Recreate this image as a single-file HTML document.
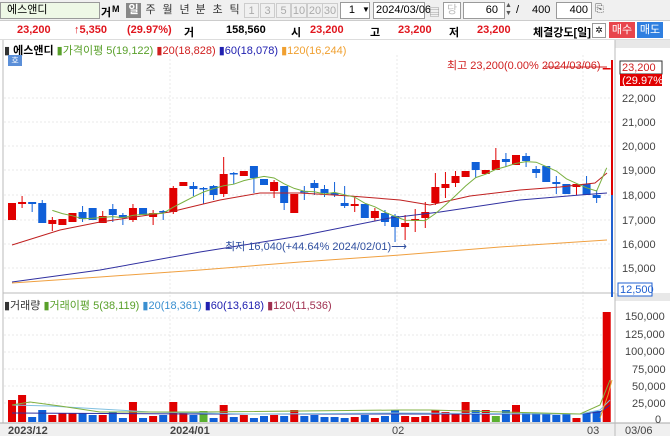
<!DOCTYPE html>
<html><head><meta charset="utf-8"><style>
*{margin:0;padding:0;box-sizing:border-box}
body{width:670px;height:436px;overflow:hidden;background:#fff;font-family:"Liberation Sans","Noto Sans CJK KR",sans-serif;font-size:11px;position:relative}
.abs{position:absolute;white-space:nowrap}
.r1{left:0;top:0;width:670px;height:21px;background:#f0f0f0;border-bottom:1px solid #ccc}
.box{position:absolute;border:1px solid #9a9a9a;background:#fff;height:17px;top:2px;font-size:11px;line-height:15px}
.tab{position:absolute;top:3px;height:15px;width:15px;text-align:center;font-size:11px;line-height:15px;color:#333}
.r2{left:0;top:21px;width:670px;height:19px;background:#fff;border-bottom:1px solid #ddd}
.red{color:#e0161e;font-weight:bold}
.b{font-weight:bold}
</style></head><body>
<div class="abs r1"></div>
<div class="box" style="left:0;width:100px;background:#eef8e6;padding-left:6px">에스앤디</div>
<div class="abs b" style="left:101px;top:4px">거</div>
<div class="abs b" style="left:112px;top:4px;font-size:9px">M</div>
<div class="tab" style="left:126px;background:#888;color:#fff;font-weight:bold">일</div>
<div class="tab" style="left:143px">주</div>
<div class="tab" style="left:160px">월</div>
<div class="tab" style="left:177px">년</div>
<div class="tab" style="left:193px">분</div>
<div class="tab" style="left:210px">초</div>
<div class="tab" style="left:227px">틱</div>
<div class="tab" style="left:244px;color:#aaa;border:1px solid #ccc">1</div>
<div class="tab" style="left:260px;color:#aaa;border:1px solid #ccc">3</div>
<div class="tab" style="left:276px;color:#aaa;border:1px solid #ccc">5</div>
<div class="tab" style="left:291px;color:#aaa;border:1px solid #ccc;width:16px">10</div>
<div class="tab" style="left:307px;color:#aaa;border:1px solid #ccc;width:16px">20</div>
<div class="tab" style="left:322px;color:#aaa;border:1px solid #ccc;width:16px">30</div>
<div class="box" style="left:340px;width:30px;text-align:right;padding-right:14px">1</div>
<div class="abs" style="left:362px;top:5px;font-size:8px">▼</div>
<div class="box" style="left:373px;width:52px;padding-left:2px">2024/03/06</div>
<div class="abs" style="left:429px;top:4px;color:#888">▤</div>
<div class="box" style="left:443px;width:18px;color:#bbb;text-align:center">당</div>
<div class="box" style="left:463px;width:42px;text-align:right;padding-right:6px">60</div>
<div class="abs" style="left:505px;top:2px;font-size:7px;line-height:8px;color:#555">▲<br>▼</div>
<div class="abs" style="left:516px;top:4px">/</div>
<div class="abs" style="left:532px;top:4px">400</div>
<div class="box" style="left:556px;width:36px;text-align:right;padding-right:3px">400</div>
<div class="abs" style="left:595px;top:3px;color:#555">⎘</div>

<div class="abs r2"></div>
<div class="abs red" style="left:17px;top:24px">23,200</div>
<div class="abs red" style="left:74px;top:24px">↑5,350</div>
<div class="abs red" style="left:127px;top:24px">(29.97%)</div>
<div class="abs b" style="left:184px;top:24px">거</div>
<div class="abs b" style="left:226px;top:24px">158,560</div>
<div class="abs b" style="left:291px;top:24px">시</div>
<div class="abs red" style="left:310px;top:24px">23,200</div>
<div class="abs b" style="left:370px;top:24px">고</div>
<div class="abs red" style="left:398px;top:24px">23,200</div>
<div class="abs b" style="left:449px;top:24px">저</div>
<div class="abs red" style="left:477px;top:24px">23,200</div>
<div class="abs b" style="left:533px;top:24px">체결강도[일]</div>
<div class="abs" style="left:592px;top:23px;width:14px;height:15px;border:1px solid #999;text-align:center;font-size:9px;line-height:13px">✲</div>
<div class="abs" style="left:609px;top:22px;width:26px;height:16px;background:#e8454c;color:#fff;text-align:center;line-height:16px">매수</div>
<div class="abs" style="left:637px;top:22px;width:26px;height:16px;background:#2f7fe0;color:#fff;text-align:center;line-height:16px">매도</div>

<div class="abs" style="left:4px;top:42px;font-size:11px"><span style="color:#333">▮ </span><b>에스앤디</b> <span style="color:#59a02a">▮가격이평 5(19,122)</span> <span style="color:#d02020">▮20(18,828)</span> <span style="color:#2020b0">▮60(18,078)</span> <span style="color:#f0a030">▮120(16,244)</span></div>
<div class="abs" style="left:8px;top:55px;width:14px;height:11px;background:#5b8fd8;color:#fff;font-size:8px;text-align:center;line-height:11px">호</div>

<div class="abs" style="left:4px;top:297px;font-size:11px"><span style="color:#333">▮거래량</span> <span style="color:#59a02a">▮거래이평 5(38,119)</span> <span style="color:#3a8fd0">▮20(18,361)</span> <span style="color:#2020b0">▮60(13,618)</span> <span style="color:#a03050">▮120(11,536)</span></div>

<svg class="abs" style="left:0;top:0" width="670" height="436" id="s">
<g stroke="#e8e8e8" stroke-dasharray="2,2" fill="none">
<line x1="4" y1="98" x2="612" y2="98"/><line x1="4" y1="122" x2="612" y2="122"/><line x1="4" y1="146" x2="612" y2="146"/><line x1="4" y1="170" x2="612" y2="170"/><line x1="4" y1="195" x2="612" y2="195"/><line x1="4" y1="220" x2="612" y2="220"/><line x1="4" y1="244" x2="612" y2="244"/><line x1="4" y1="268" x2="612" y2="268"/>
<line x1="4" y1="318" x2="612" y2="318"/><line x1="4" y1="335" x2="612" y2="335"/><line x1="4" y1="352" x2="612" y2="352"/><line x1="4" y1="369" x2="612" y2="369"/><line x1="4" y1="386" x2="612" y2="386"/><line x1="4" y1="403" x2="612" y2="403"/>
<line x1="170" y1="55" x2="170" y2="422"/><line x1="397" y1="55" x2="397" y2="422"/><line x1="583" y1="55" x2="583" y2="422"/>
</g>
<line x1="3" y1="40" x2="3" y2="424" stroke="#bbb"/>
<line x1="3" y1="293" x2="615" y2="293" stroke="#bbb"/>
<rect x="615" y="40" width="55" height="8" fill="#e8e8e8"/>
<rect x="615" y="293" width="55" height="8" fill="#e8e8e8"/>
<rect x="0" y="423" width="670" height="13" fill="#f0f0f0"/>
<line x1="0" y1="423" x2="670" y2="423" stroke="#aaa"/>
<line x1="615" y1="40" x2="615" y2="436" stroke="#bbb"/>
<line x1="612" y1="60" x2="612" y2="195" stroke="#e00000" stroke-width="2"/>
<line x1="612" y1="195" x2="612" y2="297" stroke="#2060d0" stroke-width="2"/>
<g id="c"></g>
<polyline fill="none" stroke="#c02020" stroke-width="1" points="12,245 60,230 100,222 170,212 220,200 260,193 300,193 350,196 400,200 430,205 470,196 520,190 560,187 595,183 607,173"/>
<polyline fill="none" stroke="#3030a0" stroke-width="1" points="12,282 100,270 200,252 300,236 390,218 440,212 520,200 580,195 607,193"/>
<polyline fill="none" stroke="#f0a040" stroke-width="1" points="12,283 100,277 200,270 300,262 400,255 500,247 607,240"/>
<polyline id="m5" fill="none" stroke="#7ab040" stroke-width="1"/>
<polyline fill="none" stroke="#3030a0" points="12,413 200,414 400,414 580,414 600,412 610,405"/>
<polyline fill="none" stroke="#80c0e0" points="12,405 50,406 100,409 150,412 250,414 400,413 580,414 600,410 610,400"/>
<polyline fill="none" stroke="#80b040" points="12,405 30,402 60,406 100,412 200,412 400,410 430,410 580,414 600,405 610,380"/>
<polyline fill="none" stroke="#e0a030" points="600,418 608,395 612,380"/>
<line x1="545" y1="67" x2="607" y2="67" stroke="#d02020"/>
<text x="447" y="69" font-size="11" fill="#d02020" font-family="Liberation Sans,Noto Sans CJK KR">최고 23,200(0.00% 2024/03/06)</text>
<text x="225" y="250" font-size="11" fill="#3050a0" font-family="Liberation Sans,Noto Sans CJK KR">최저 16,040(+44.64% 2024/02/01)⟶</text>
<g font-size="11" fill="#444" font-family="Liberation Sans">
<text x="622" y="102">22,000</text><text x="622" y="126">21,000</text><text x="622" y="150">20,000</text><text x="622" y="174">19,000</text><text x="622" y="199">18,000</text><text x="622" y="224">17,000</text><text x="622" y="248">16,000</text><text x="622" y="272">15,000</text>
<text x="625" y="320">150,000</text><text x="625" y="338">125,000</text><text x="625" y="355">100,000</text><text x="632" y="373">75,000</text><text x="632" y="390">50,000</text><text x="632" y="407">25,000</text><text x="655" y="423">0</text>
<text x="8" y="434" font-weight="bold">2023/12</text><text x="170" y="434" font-weight="bold">2024/01</text><text x="392" y="434">02</text><text x="587" y="434">03</text><text x="625" y="434">03/06</text>
</g>
<rect x="620" y="61" width="42" height="13" fill="#fff" stroke="#333"/>
<text x="622" y="71" font-size="11" fill="#d02020" font-family="Liberation Sans">23,200</text>
<rect x="620" y="74" width="42" height="12" fill="#e00000"/>
<text x="622" y="84" font-size="11" fill="#fff" font-family="Liberation Sans">(29.97%)</text>
<rect x="618" y="283" width="34" height="13" fill="#fff" stroke="#2060d0"/>
<text x="620" y="293" font-size="11" fill="#2060d0" font-family="Liberation Sans">12,500</text>
</svg>
<script>
var C=[[220,203,203,220],[204,202,196,208],[202,204,202,212],[203,223,200,223],[224,220,217,231],[225,219,219,225],[222,213,213,222],[212,219,206,222],[208,220,208,220],[223,216,211,223],[209,215,204,222],[215,218,213,225],[220,208,204,222],[208,215,208,215],[217,213,210,225],[211,212,210,220],[212,188,186,214],[186,182,182,186],[186,189,182,196],[188,189,187,204],[186,195,185,200],[194,174,157,197],[173,174,172,184],[176,171,171,176],[166,178,166,193],[179,185,179,185],[191,182,180,198],[186,203,186,210],[213,194,194,213],[191,192,186,200],[183,188,180,195],[189,193,185,197],[193,195,182,197],[203,206,186,208],[206,204,196,212],[204,218,204,218],[218,211,208,221],[213,222,210,226],[216,227,214,242],[227,223,215,240],[221,219,209,232],[218,212,202,228],[203,187,173,205],[188,184,172,198],[183,176,171,187],[177,171,171,177],[162,170,162,178],[174,170,170,174],[170,160,148,170],[159,162,153,167],[165,155,155,165],[156,161,153,167],[169,173,166,178],[166,182,166,182],[182,184,176,194],[184,194,184,194],[187,184,184,195],[184,195,176,195],[195,198,190,203],[69,68,68,69]];
var V=[400,395,417,410,415,413,413,413,415,415,412,418,402,418,416,415,402,413,415,411,418,405,417,415,418,416,415,416,410,416,415,417,417,418,417,415,418,416,410,416,417,416,410,412,413,402,410,410,416,410,405,413,413,414,415,414,418,413,411,312];
var s='',m=[];
for(var i=0;i<C.length;i++){var x=12+i*10.08,c=C[i],up=c[1]<c[0]||i==C.length-1,col=up?'#e00000':'#1060d8';
s+='<line x1="'+x+'" y1="'+c[2]+'" x2="'+x+'" y2="'+c[3]+'" stroke="'+col+'"/>';
var t=Math.min(c[0],c[1]),h=Math.max(1.5,Math.abs(c[0]-c[1]));s+='<rect x="'+(x-4)+'" y="'+t+'" width="8" height="'+h+'" fill="'+col+'"/>';
var vc=(i==19||i==48)?'#5ab030':col;s+='<rect x="'+(x-4)+'" y="'+V[i]+'" width="8" height="'+(422-V[i])+'" fill="'+vc+'"/>';
if(i>=4&&i<C.length){var a=0;for(var j=i-4;j<=i;j++)a+=C[j][1];m.push(x+','+(a/5).toFixed(1));}}
document.getElementById('c').innerHTML=s;
document.getElementById('m5').setAttribute('points',m.join(' '));
</script>
</body></html>
